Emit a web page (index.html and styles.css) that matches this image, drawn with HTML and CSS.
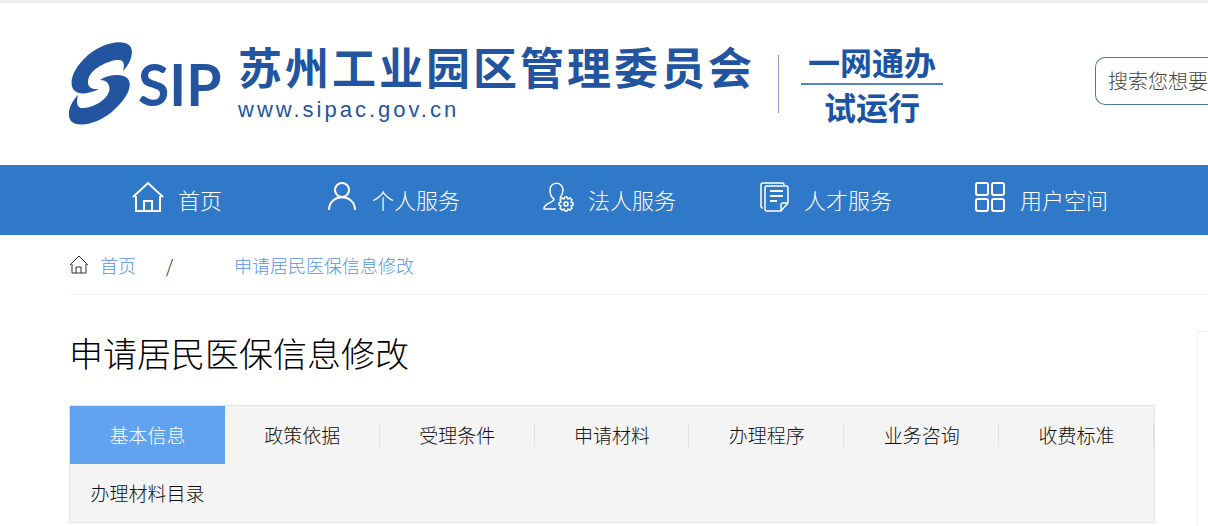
FILE: index.html
```html
<!DOCTYPE html>
<html lang="zh-CN">
<head>
    <meta charset="UTF-8">
    <meta name="viewport" content="width=device-width, initial-scale=1.0">
    <title>申请居民医保信息修改</title>
    <link rel="stylesheet" href="styles.css">
</head>
<body>
    <header class="header">
        <a class="logo" href="#">
            <svg class="logo-mark" viewBox="0 0 64 84" aria-hidden="true">
                <path d="M54 29C62 21 66 8 60 3C51-4 28 3 15 17C3 29-1 43 6 49C10 53 20 52 30 47C20 48 17 42 20 35C24 26 40 18 49 18C55 18 56 22 54 29Z"/>
                <path d="M9 53C1 61-3 73 2 79C9 87 33 81 47 66C60 54 64 41 58 36C52 31 39 33 31 38C38 38 42 43 40 50C36 60 22 66 14 66C8 66 7 61 9 53Z"/>
            </svg>
            <span class="logo-sip">SIP</span>
            <span class="logo-name">
                <span class="logo-title">苏州工业园区管理委员会</span>
                <span class="logo-url">www.sipac.gov.cn</span>
            </span>
        </a>
        <div class="slogan">
            <span class="slogan-top">一网通办</span>
            <span class="slogan-bottom">试运行</span>
        </div>
        <form class="search">
            <input type="text" placeholder="搜索您想要的内容" aria-label="搜索">
        </form>
    </header>

    <nav class="navbar">
        <a href="#">
            <svg viewBox="0 0 32 32"><path d="M1 16L16 2L31 16M4 15V30H28V15M12 30V20H20V30"/></svg>
            <span>首页</span>
        </a>
        <a href="#">
            <svg viewBox="0 0 32 32"><circle cx="16" cy="9" r="7"/><path d="M3 29C3 12 29 12 29 29"/></svg>
            <span>个人服务</span>
        </a>
        <a href="#">
            <svg class="thin" viewBox="0 0 32 32"><path d="M14 28H2C1 22 12 22 12 18C9 16 8 12 8 9C8 0 21 0 21 9C21 12 20 14 18 17"/><circle cx="24" cy="23" r="2"/><path d="M23 16H25L26 18L28 17L30 19L29 21L31 22V24L29 25L30 27L28 29L26 28L25 30H23L22 28L20 29L18 27L19 25L17 24V22L19 21L18 19L20 17L22 18Z"/></svg>
            <span>法人服务</span>
        </a>
        <a href="#">
            <svg class="thin" viewBox="0 0 32 32"><path d="M5 27Q3 27 3 25V4Q3 2 5 2H24Q26 2 26 4M23 30H9Q7 30 7 28V7Q7 5 9 5H28Q30 5 30 7V22ZM23 30V24Q23 22 25 22H30"/><path class="lines" d="M12 10H25M12 15H25M12 20H19"/></svg>
            <span>人才服务</span>
        </a>
        <a href="#">
            <svg viewBox="0 0 32 32"><rect x="2" y="2" width="12" height="12" rx="2"/><rect x="18" y="2" width="12" height="12" rx="2"/><rect x="2" y="18" width="12" height="12" rx="2"/><rect x="18" y="18" width="12" height="12" rx="2"/></svg>
            <span>用户空间</span>
        </a>
    </nav>

    <main>
        <div class="breadcrumb">
            <svg viewBox="0 0 20 20"><path d="M1 10L10 1L19 10M3 9V18H17V9M7 18V12H12V18"/></svg>
            <a href="#">首页</a>
            <span class="slash">/</span>
            <a href="#">申请居民医保信息修改</a>
        </div>

        <div class="content">
            <section class="detail">
                <h1>申请居民医保信息修改</h1>
                <div class="tabs">
                    <button type="button" class="active">基本信息</button>
                    <button type="button">政策依据</button>
                    <button type="button">受理条件</button>
                    <button type="button">申请材料</button>
                    <button type="button">办理程序</button>
                    <button type="button">业务咨询</button>
                    <button type="button">收费标准</button>
                    <button type="button">办理材料目录</button>
                </div>
            </section>
            <aside class="sidebar"></aside>
        </div>
    </main>
</body>
</html>
```
FILE: styles.css
```css
* {
    box-sizing: border-box;
}

body {
    margin: 0;
    min-height: 100vh;
    display: flex;
    flex-direction: column;
    border-top: 3px solid #eee;
    background-color: #fff;
    font-family: "Noto Sans CJK SC", sans-serif;
    font-weight: 300;
    color: #222;
}

a {
    text-decoration: none;
}

/* Header */
.header {
    display: flex;
    align-items: center;
    height: 162px;
    padding-left: 69px;
    white-space: nowrap;
}

.logo {
    display: flex;
    align-items: center;
    flex: none;
    color: #22549f;
}

.logo-mark {
    width: 64px;
    height: 84px;
    fill: #22549f;
}

.logo-sip {
    width: 105px;
    padding-left: 5px;
    font-family: Lato, sans-serif;
    font-size: 57px;
    font-weight: 700;
    line-height: 84px;
}

.logo-name {
    display: flex;
    flex-direction: column;
    gap: 4px;
    width: 540px;
    padding-bottom: 2px;
}

.logo-title {
    font-size: 44px;
    font-weight: 700;
    line-height: 50px;
    letter-spacing: 3px;
}

.logo-url {
    font-family: "Liberation Sans", sans-serif;
    font-size: 22px;
    font-weight: 400;
    line-height: 30px;
    letter-spacing: 3px;
}

.slogan {
    display: flex;
    flex: none;
    flex-direction: column;
    align-items: center;
    justify-content: center;
    height: 58px;
    padding-left: 22px;
    border-left: 1px solid #8798bd;
    color: #1b54a4;
    font-size: 32px;
    font-weight: 700;
    line-height: 43px;
}

.slogan-top {
    padding: 0 7px;
    border-bottom: 2px solid #5683bd;
}

.search {
    flex: 1;
    min-width: 0;
    margin-left: 152px;
    padding-bottom: 6px;
}

.search input {
    display: block;
    width: 100%;
    height: 48px;
    padding: 0 0 2px 12px;
    border: 1px solid #4e7899;
    border-right: 0;
    border-radius: 10px 0 0 10px;
    background-color: #fff;
    font-family: inherit;
    font-size: 20px;
    font-weight: 300;
}

.search input::placeholder {
    color: #444;
}

/* Navbar */
.navbar {
    display: flex;
    height: 70px;
    padding-left: 69px;
    background-color: #3079c9;
}

.navbar a {
    display: flex;
    flex: 0 0 216px;
    align-items: center;
    justify-content: center;
    gap: 14px;
    color: #fff;
    font-size: 22px;
}

.navbar span {
    padding-bottom: 2px;
}

.navbar svg {
    width: 32px;
    height: 32px;
    margin-bottom: 6px;
    fill: none;
    stroke: #fff;
    stroke-width: 2;
}

.navbar svg.thin {
    stroke-width: 1.5;
}

.navbar .lines {
    stroke-width: 2;
}

/* Main content */
main {
    display: flex;
    flex: 1;
    flex-direction: column;
    padding-left: 69px;
}

.breadcrumb {
    display: flex;
    align-items: center;
    height: 60px;
    border-bottom: 1px solid #f1f1f1;
    font-size: 18px;
}

.breadcrumb svg {
    width: 20px;
    height: 20px;
    margin-right: 11px;
    fill: none;
    stroke: #333;
}

.breadcrumb a {
    color: #5595e5;
}

.slash {
    width: 98px;
    padding-left: 30px;
}

.content {
    display: flex;
    flex: 1;
    gap: 42px;
}

.detail {
    flex: 1;
}

h1 {
    margin: 32px 0 27px;
    color: #000;
    font-size: 34px;
    font-weight: 300;
    line-height: 51px;
}

.tabs {
    display: grid;
    grid-template-columns: repeat(7, 1fr);
    border: 1px solid #e3e3e3;
    background-color: #f4f4f4;
}

.tabs button {
    height: 58px;
    padding: 0 0 2px;
    border: 0;
    background: linear-gradient(#e3e3e3, #e3e3e3) no-repeat right center / 1px 24px;
    color: #111;
    font-family: inherit;
    font-size: 19px;
    font-weight: 300;
}

.tabs .active {
    background: #62a3f0;
    color: #fff;
}

.tabs button:last-child {
    background: none;
}

.sidebar {
    flex: 0 0 11px;
    margin-top: 36px;
    border: 1px solid #f1f1f1;
    border-width: 1px 0 0 1px;
}
```
